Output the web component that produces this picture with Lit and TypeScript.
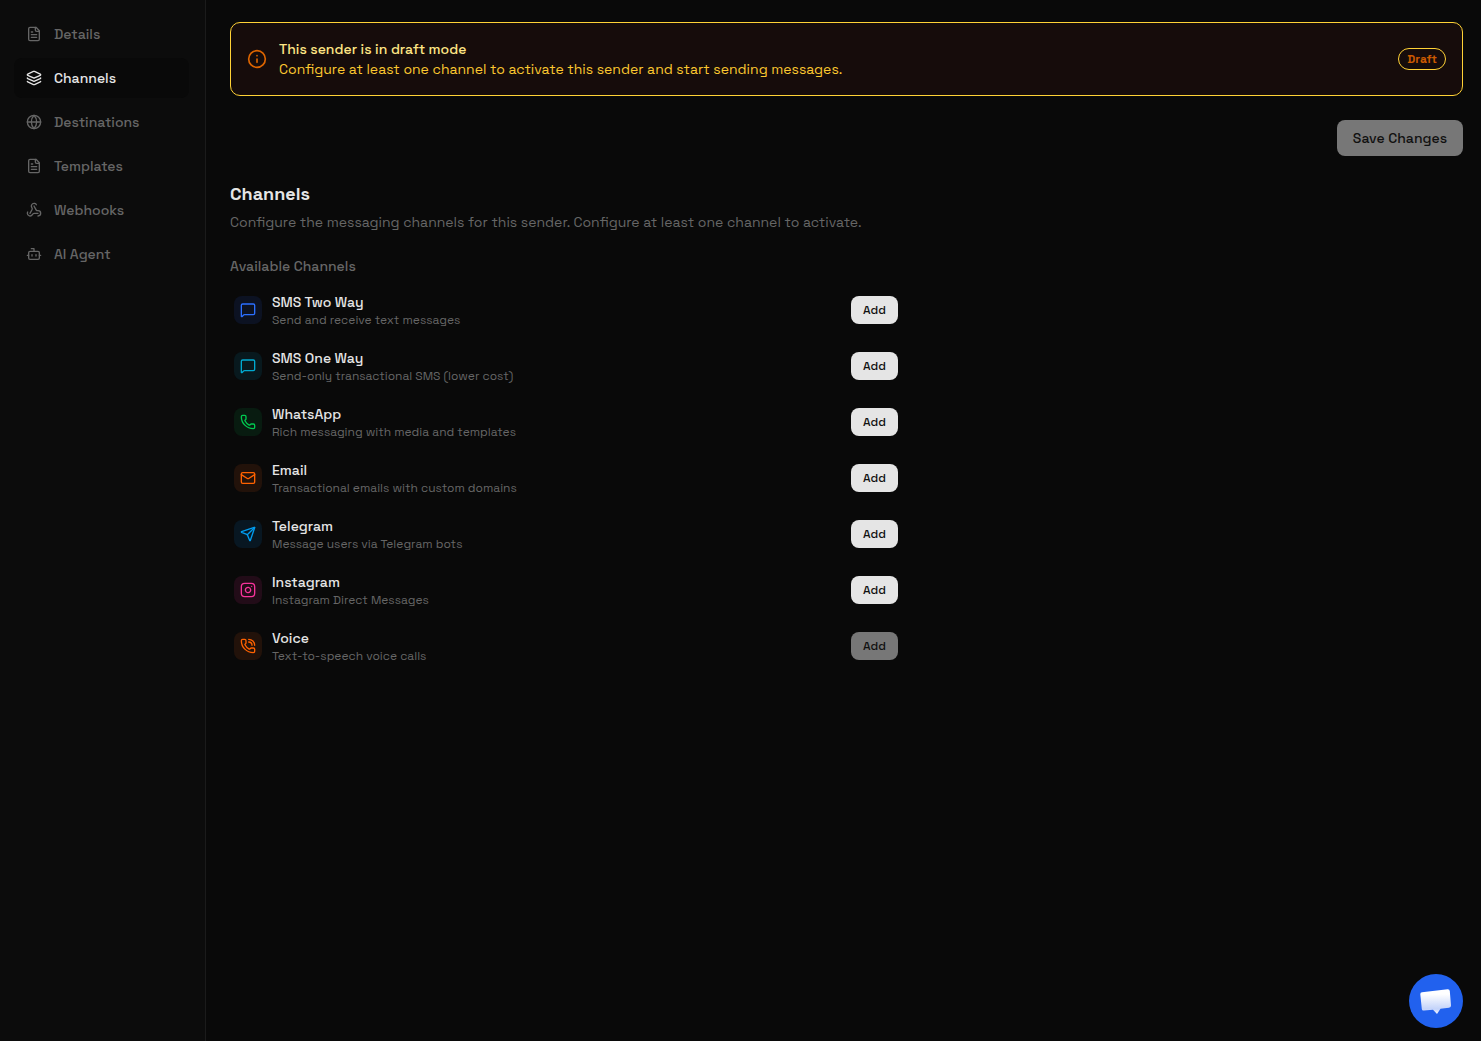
import { LitElement, html, css, svg } from "lit";
import { customElement } from "lit/decorators.js";

const handset = svg`<path d="M13.832 16.568a1 1 0 0 0 1.213-.303l.355-.465A2 2 0 0 1 17 15h3a2 2 0 0 1 2 2v3a2 2 0 0 1-2 2A18 18 0 0 1 2 4a2 2 0 0 1 2-2h3a2 2 0 0 1 2 2v3a2 2 0 0 1-.8 1.6l-.468.351a1 1 0 0 0-.292 1.233 14 14 0 0 0 6.392 6.384"/>`;

const icons = {
  file: svg`<path d="M15 2H6a2 2 0 0 0-2 2v16a2 2 0 0 0 2 2h12a2 2 0 0 0 2-2V7Z"/><path d="M14 2v4a2 2 0 0 0 2 2h4"/><path d="M10 9H8"/><path d="M16 13H8"/><path d="M16 17H8"/>`,
  layers: svg`<path d="M12.83 2.18a2 2 0 0 0-1.66 0L2.6 6.08a1 1 0 0 0 0 1.83l8.58 3.91a2 2 0 0 0 1.66 0l8.58-3.9a1 1 0 0 0 0-1.83z"/><path d="M2 12a1 1 0 0 0 .58.91l8.6 3.91a2 2 0 0 0 1.65 0l8.58-3.9A1 1 0 0 0 22 12"/><path d="M2 17a1 1 0 0 0 .58.91l8.6 3.91a2 2 0 0 0 1.65 0l8.58-3.9A1 1 0 0 0 22 17"/>`,
  globe: svg`<circle cx="12" cy="12" r="10"/><path d="M12 2a14.5 14.5 0 0 0 0 20 14.5 14.5 0 0 0 0-20"/><path d="M2 12h20"/>`,
  webhook: svg`<path d="M18 16.98h-5.99c-1.1 0-1.95.94-2.48 1.9A4 4 0 0 1 2 17c.01-.7.2-1.4.57-2"/><path d="m6 17 3.13-5.78c.53-.97.1-2.18-.5-3.1a4 4 0 1 1 6.89-4.06"/><path d="m12 6 3.13 5.73C15.66 12.7 16.9 13 18 13a4 4 0 0 1 0 8"/>`,
  bot: svg`<path d="M12 8V4H8"/><rect width="16" height="12" x="4" y="8" rx="2"/><path d="M2 14h2"/><path d="M20 14h2"/><path d="M15 13v2"/><path d="M9 13v2"/>`,
  info: svg`<circle cx="12" cy="12" r="10"/><path d="M12 16v-4"/><path d="M12 8h.01"/>`,
  message: svg`<path d="M22 17a2 2 0 0 1-2 2H6.828a2 2 0 0 0-1.414.586l-2.202 2.202A.71.71 0 0 1 2 21.286V5a2 2 0 0 1 2-2h16a2 2 0 0 1 2 2z"/>`,
  phone: handset,
  mail: svg`<path d="m22 7-8.991 5.727a2 2 0 0 1-2.009 0L2 7"/><rect width="20" height="16" x="2" y="4" rx="2"/>`,
  send: svg`<path d="M14.536 21.686a.5.5 0 0 0 .937-.024l6.5-19a.496.496 0 0 0-.635-.635l-19 6.5a.5.5 0 0 0-.024.937l7.93 3.18a2 2 0 0 1 1.112 1.11z"/><path d="m21.854 2.147-10.94 10.939"/>`,
  instagram: svg`<rect width="20" height="20" x="2" y="2" rx="5"/><path d="M16 11.37A4 4 0 1 1 12.63 8 4 4 0 0 1 16 11.37z"/><path d="M17.5 6.5h.01"/>`,
  call: svg`<path d="M13 2a9 9 0 0 1 9 9"/><path d="M13 6a5 5 0 0 1 5 5"/>${handset}`,
};
type IconName = keyof typeof icons;

const icon = (name: IconName) => html`
  <svg class="icon" viewBox="0 0 24 24" aria-hidden="true">${icons[name]}</svg>
`;

const navItems: { label: string; icon: IconName; active?: boolean }[] = [
  { label: "Details", icon: "file" },
  { label: "Channels", icon: "layers", active: true },
  { label: "Destinations", icon: "globe" },
  { label: "Templates", icon: "file" },
  { label: "Webhooks", icon: "webhook" },
  { label: "AI Agent", icon: "bot" },
];

const channels: { name: string; text: string; icon: IconName; tone: string; disabled?: boolean }[] = [
  { name: "SMS Two Way", text: "Send and receive text messages", icon: "message", tone: "blue" },
  { name: "SMS One Way", text: "Send-only transactional SMS (lower cost)", icon: "message", tone: "cyan" },
  { name: "WhatsApp", text: "Rich messaging with media and templates", icon: "phone", tone: "green" },
  { name: "Email", text: "Transactional emails with custom domains", icon: "mail", tone: "orange" },
  { name: "Telegram", text: "Message users via Telegram bots", icon: "send", tone: "sky" },
  { name: "Instagram", text: "Instagram Direct Messages", icon: "instagram", tone: "pink" },
  { name: "Voice", text: "Text-to-speech voice calls", icon: "call", tone: "orange", disabled: true },
];

@customElement("app-root")
export class AppRoot extends LitElement {
  static styles = css`
    :host {
      display: flex;
      min-height: 100vh;
      background: #090909;
      color: #e5e5e5;
      font-family: "Space Grotesk", Inter, "Liberation Sans", sans-serif;
      font-size: 14px;
      line-height: 20px;
    }
    * { box-sizing: border-box; }
    h2, h3, p, ul { margin: 0; padding: 0; }
    ul { list-style: none; }
    button { font: inherit; border: 0; cursor: pointer; }
    .icon {
      display: block;
      width: 16px;
      height: 16px;
      flex: none;
      fill: none;
      stroke: currentColor;
      stroke-width: 2;
      stroke-linecap: round;
      stroke-linejoin: round;
    }
    .sidebar {
      flex: none;
      width: 206px;
      padding: 14px 16px 14px 14px;
      background: #0c0c0c;
      border-right: 1px solid #1b1b1b;
    }
    .nav { display: grid; gap: 4px; }
    .nav-link {
      display: flex;
      align-items: center;
      gap: 12px;
      height: 40px;
      padding: 0 12px;
      border-radius: 8px;
      color: #666;
      font-weight: 500;
      text-decoration: none;
    }
    .nav-link.active { background: #090909; color: #e5e5e5; }
    .main { flex: 1; min-width: 0; padding: 22px 18px 24px 24px; }
    .banner {
      display: flex;
      align-items: center;
      gap: 12px;
      padding: 16px;
      border: 1px solid #ffd236;
      border-radius: 10px;
      background: #160c0b;
      color: #fcc830;
    }
    .banner .icon { width: 20px; height: 20px; color: #dd6500; }
    .banner-text { flex: 1; }
    .banner-title { font-weight: 500; color: #fee685; }
    .badge {
      padding: 2px 8px;
      border: 1px solid #ffd236;
      border-radius: 11px;
      color: #cc5a00;
      font-size: 12px;
      line-height: 16px;
      font-weight: 600;
    }
    .actions { display: flex; justify-content: flex-end; padding: 24px 0; }
    .save {
      height: 36px;
      padding: 0 16px;
      border-radius: 8px;
      background: #777;
      color: #111;
      font-weight: 500;
    }
    .title { font-size: 18px; line-height: 28px; font-weight: 600; }
    .lead { margin-top: 4px; color: #666; }
    .subtitle { margin: 24px 0 6px; color: #666; font-size: 14px; font-weight: 500; }
    .channels { max-width: 672px; }
    .channel { display: flex; align-items: center; gap: 10px; height: 56px; padding: 0 4px; }
    .tile { display: grid; place-items: center; width: 28px; height: 28px; border-radius: 8px; }
    .channel-text { flex: 1; }
    .channel-name { font-weight: 500; line-height: 20px; }
    .channel-note { color: #666; font-size: 12px; line-height: 16px; }
    .add {
      height: 28px;
      padding: 0 12px;
      border-radius: 8px;
      background: #e5e5e5;
      color: #111;
      font-size: 12px;
      font-weight: 500;
    }
    .add:disabled { background: #777; }
    .blue { background: #0c1222; color: #2b6fff; }
    .cyan { background: #08191e; color: #00a9d0; }
    .green { background: #081b10; color: #00c950; }
    .orange { background: #22120a; color: #ff6200; }
    .sky { background: #081722; color: #009cef; }
    .pink { background: #220c18; color: #f6339a; }
    .chat {
      position: fixed;
      right: 18px;
      bottom: 13px;
      width: 54px;
      height: 54px;
      padding: 0;
      border-radius: 50%;
      background: #2161ee;
    }
    .chat-art { display: block; width: 54px; height: 54px; }
  `;

  render() {
    return html`
      <aside class="sidebar">
        <nav class="nav" aria-label="Sender">
          ${navItems.map(
            (item) => html`<a class="nav-link ${item.active ? "active" : ""}" href="#">${icon(item.icon)}<span>${item.label}</span></a>`
          )}
        </nav>
      </aside>
      <main class="main">
        <section class="banner">
          ${icon("info")}
          <div class="banner-text">
            <p class="banner-title">This sender is in draft mode</p>
            <p>Configure at least one channel to activate this sender and start sending messages.</p>
          </div>
          <span class="badge">Draft</span>
        </section>
        <div class="actions"><button class="save" disabled>Save Changes</button></div>
        <h2 class="title">Channels</h2>
        <p class="lead">Configure the messaging channels for this sender. Configure at least one channel to activate.</p>
        <h3 class="subtitle">Available Channels</h3>
        <ul class="channels">
          ${channels.map(
            (c) => html`<li class="channel">
              <span class="tile ${c.tone}">${icon(c.icon)}</span>
              <div class="channel-text">
                <p class="channel-name">${c.name}</p>
                <p class="channel-note">${c.text}</p>
              </div>
              <button class="add" ?disabled=${c.disabled}>Add</button>
            </li>`
          )}
        </ul>
      </main>
      <button class="chat" aria-label="Open chat">
        <svg class="chat-art" viewBox="0 0 54 54" aria-hidden="true">
          <defs>
            <linearGradient id="bubble" x1="0" y1="0" x2="0" y2="1">
              <stop offset="0.2" stop-color="#fff" />
              <stop offset="0.8" stop-color="#c3d3fa" />
              <stop offset="1" stop-color="#f4f7ff" />
            </linearGradient>
          </defs>
          <path fill="url(#bubble)" d="M13 18.2 38.5 15.2Q40.6 15 40.8 17L42 31.5Q42.1 33.5 40 33.8L31.5 34.8 28 40 24 35.8 14.8 36.6Q13 36.8 12.8 35L11.3 20.2Q11.2 18.4 13 18.2Z" />
        </svg>
      </button>
    `;
  }
}
